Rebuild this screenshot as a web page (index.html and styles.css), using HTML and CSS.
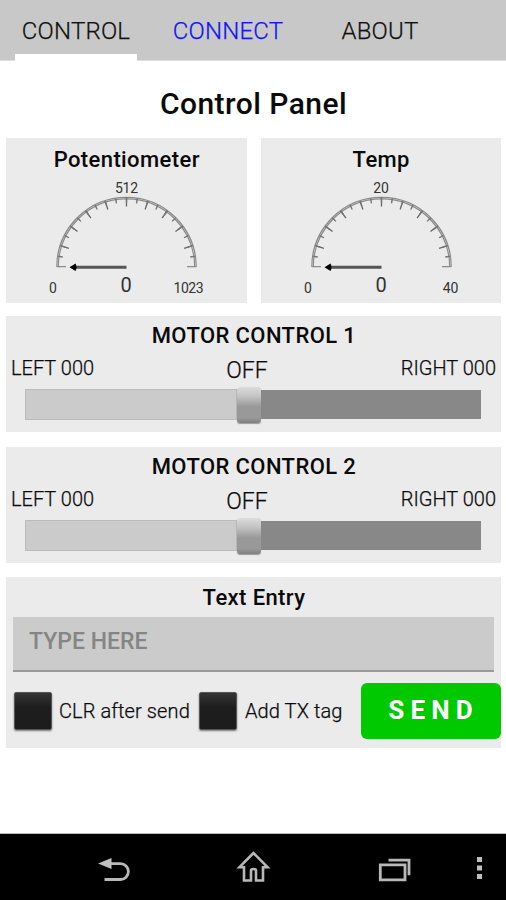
FILE: index.html
```html
<!DOCTYPE html>
<html lang="en">
<head>
<meta charset="utf-8">
<title>Control Panel</title>
<link rel="stylesheet" href="styles.css">
</head>
<body>
<nav class="tabs">
  <a class="tab active"><span>CONTROL</span></a>
  <a class="tab link"><span>CONNECT</span></a>
  <a class="tab"><span>ABOUT</span></a>
</nav>
<main>
  <h1>Control Panel</h1>
  <div class="gauges">
    <section class="panel gauge">
      <h2>Potentiometer</h2>
      <svg width="240" height="124" viewBox="6 178 240 124">
        <g class="dial">
          <path d="M56.8 267a69.7 69.7 0 0 1 139.4 0"/>
          <path d="M58.3 267a68.2 68.2 0 0 1 136.4 0"/>
          <path class="major" pathLength="180" d="M61.5 267a65 65 0 0 1 130 0"/>
          <path class="minor" pathLength="180" d="M59.5 267a67 67 0 0 1 134 0"/>
          <path d="M57 266.7h9M187 266.7h9"/>
        </g>
        <path class="needle" d="M74 267.3h52.5"/>
        <path d="M69.5 267.3l6-3.8q2 3.8 0 7.6z"/>
        <text class="scale" x="126.5" y="193" textLength="23">512</text>
        <text class="scale" x="53" y="293">0</text>
        <text class="scale" x="188.5" y="293" textLength="30">1023</text>
        <text class="value" x="126" y="292">0</text>
      </svg>
    </section>
    <section class="panel gauge">
      <h2>Temp</h2>
      <svg width="240" height="124" viewBox="6 178 240 124">
        <g class="dial">
          <path d="M56.8 267a69.7 69.7 0 0 1 139.4 0"/>
          <path d="M58.3 267a68.2 68.2 0 0 1 136.4 0"/>
          <path class="major" pathLength="180" d="M61.5 267a65 65 0 0 1 130 0"/>
          <path class="minor" pathLength="180" d="M59.5 267a67 67 0 0 1 134 0"/>
          <path d="M57 266.7h9M187 266.7h9"/>
        </g>
        <path class="needle" d="M74 267.3h52.5"/>
        <path d="M69.5 267.3l6-3.8q2 3.8 0 7.6z"/>
        <text class="scale" x="126" y="193">20</text>
        <text class="scale" x="53" y="293">0</text>
        <text class="scale" x="195.5" y="293">40</text>
        <text class="value" x="126" y="292">0</text>
      </svg>
    </section>
  </div>
  <section class="panel motor">
    <h2>MOTOR CONTROL 1</h2>
    <div class="labels"><span>LEFT 000</span><span class="off">OFF</span><span class="right">RIGHT 000</span></div>
    <div class="slider"><div class="low"></div><div class="thumb"></div><div class="high"></div></div>
  </section>
  <section class="panel motor">
    <h2>MOTOR CONTROL 2</h2>
    <div class="labels"><span>LEFT 000</span><span class="off">OFF</span><span class="right">RIGHT 000</span></div>
    <div class="slider"><div class="low"></div><div class="thumb"></div><div class="high"></div></div>
  </section>
  <section class="panel entry">
    <h2>Text Entry</h2>
    <div class="field"><span>TYPE HERE</span></div>
    <div class="actions">
      <i class="box"></i><span class="clr">CLR after send</span>
      <i class="box"></i><span class="tag">Add TX tag</span>
      <button>SEND</button>
    </div>
  </section>
</main>
<footer>
  <svg width="506" height="67" viewBox="0 833 506 67">
    <g class="icon">
      <path class="thick" d="M109 863.7h11.5a7.9 7.9 0 0 1 0 15.8h-16"/>
      <path class="solid" d="M98 863.5l13.5-5.5v11z"/>
      <path class="home" d="M253.5 853l-14 14.2h4.5v13.3h7v-10q0-1.5 2.5-1.5t2.5 1.5v10h7v-13.3h4.5z"/>
      <path class="thick" d="M380.3 864.8h24.7v15h-24.7z"/>
      <path class="thick" d="M388.5 860.2h20.5v15"/>
      <path class="solid" d="M477 857h5v5h-5zM477 865.5h5v5h-5zM477 874h5v5h-5z"/>
    </g>
  </svg>
</footer>
</body>
</html>
```

FILE: styles.css
```css
* { box-sizing: border-box; }
body {
  margin: 0;
  height: 900px;
  display: flex;
  flex-direction: column;
  background: #fff;
  color: #0a0a0a;
  font-family: Roboto, "Liberation Sans", sans-serif;
  overflow: hidden;
}
span { white-space: nowrap; }
.tabs {
  height: 61px;
  padding-left: 15px;
  display: flex;
  background: #c8c8c8;
  border-bottom: 1px solid #dedede;
}
.tab {
  height: 61px;
  width: 122px;
  margin-right: 30px;
  display: flex;
  justify-content: center;
  font-size: 24px;
  font-weight: 300;
  letter-spacing: .2px;
  line-height: 62px;
  color: #111;
}
.tab, .labels, .actions span { -webkit-text-stroke: .25px; }
.tab.active { border-bottom: 7px solid #fff; }
.tab.link { color: #1414f0; }
main { padding: 0 5px 0 6px; flex: 1; }
h1 {
  margin: 0;
  height: 76.6px;
  padding-top: 24px;
  line-height: 38px;
  font-size: 30px;
  font-weight: 500;
  letter-spacing: .45px;
  text-align: center;
}
h2 {
  margin: 0;
  padding-left: 1px;
  font-size: 22px;
  font-weight: 500;
  letter-spacing: .4px;
  line-height: 26px;
  text-align: center;
}
.panel { background: #ebebeb; }
.gauges { display: flex; gap: 14px; margin-bottom: 13.4px; }
.gauge { width: 240.5px; height: 165px; padding-top: 9px; overflow: hidden; }
.gauge h2 { height: 31.4px; }
.gauge svg { display: block; }
.dial path { fill: none; stroke: #8c8c8c; stroke-width: 1.2; }
.dial .major { stroke: #666; stroke-width: 9; stroke-dasharray: 1.2 16.8; stroke-dashoffset: .6; }
.dial .minor { stroke: #777; stroke-width: 5; stroke-dasharray: 1.2 7.8; stroke-dashoffset: .6; }
.needle { stroke: #555; stroke-width: 3; }
text { text-anchor: middle; fill: #333; }
.scale { font-size: 14px; }
.value { font-size: 20px; font-weight: 400; }
.motor { height: 116px; margin-bottom: 15px; padding-top: 7px; }
.motor + .motor { margin-bottom: 14px; }
.labels {
  height: 38px;
  padding: 0 5px;
  display: grid;
  grid-template-columns: 1fr auto 1fr;
  font-size: 20px;
  font-weight: 300;
  line-height: 38px;
}
.off { font-size: 23px; line-height: 43px; margin-right: 13px; }
.right { text-align: right; }
.slider { display: flex; align-items: center; margin: 0 20px 0 19px; height: 36px; }
.low { width: 212px; height: 31px; background: #cbcbcb; border: 1px solid #bbb; }
.thumb {
  width: 24px;
  height: 36px;
  border-radius: 3px;
  background: linear-gradient(#dcdcdc, #c4c4c4 25%, #999 55%, #999 85%, #808080);
  box-shadow: 0 1px 1px #999;
}
.high { flex: 1; height: 29px; background: #888; }
.entry { height: 171.5px; padding-top: 8px; }
.field {
  height: 55px;
  margin: 6px 7px 0;
  padding-left: 16px;
  background: #cbcbcb;
  border-bottom: 2px solid #999;
  color: #858585;
  font-size: 23px;
  font-weight: 500;
  line-height: 49px;
}
.actions { display: flex; align-items: center; margin-top: 11px; padding-left: 8px; font-size: 20px; font-weight: 300; letter-spacing: .1px; }
.box {
  width: 38px;
  height: 38px;
  border: 1px solid #555;
  border-radius: 2px;
  background: linear-gradient(#343434, #1e1e1e 40%, #1c1c1c);
  box-shadow: 0 1px 2px #777;
}
.clr { width: 140px; margin-left: 7px; }
.tag { margin-left: 8px; }
button {
  width: 140px;
  height: 56px;
  margin-left: auto;
  padding: 0 0 1px 5px;
  border: 0;
  border-radius: 6px;
  background: #00c900;
  color: #fff;
  font: 700 26px Roboto, sans-serif;
  letter-spacing: 6.1px;
}
footer { height: 67px; background: #000; border-top: 1px solid #bbb; }
footer svg { display: block; margin-top: -1px; }
.icon path { fill: none; stroke: #b8b8b8; stroke-width: 2.2; }
.icon .home { stroke-width: 2.6; }
.icon .thick { stroke-width: 2.8; }
.icon .solid { fill: #c0c0c0; stroke: none; }
```
